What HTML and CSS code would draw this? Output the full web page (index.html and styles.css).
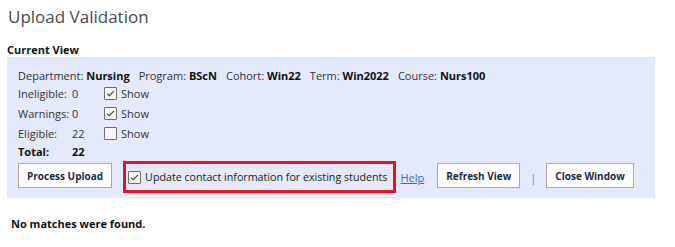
FILE: index.html
```html
<!DOCTYPE html>
<html lang="en">
<head>
  <meta charset="UTF-8" />
  <title>Upload Validation</title>
  <link rel="stylesheet" href="styles.css">
</head>
<body>
  <h1 class="page-title">Upload Validation</h1>

  <h2 class="section-title">Current View</h2>
  <div class="panel">
    <div class="filters">
      <span>Department: <b>Nursing</b></span>
      <span>Program: <b>BScN</b></span>
      <span>Cohort: <b>Win22</b></span>
      <span>Term: <b>Win2022</b></span>
      <span>Course: <b>Nurs100</b></span>
    </div>

    <table class="counts">
      <tr>
        <td class="label">Ineligible:</td>
        <td class="num">0</td>
        <td><label class="show"><input type="checkbox" checked> Show</label></td>
      </tr>
      <tr>
        <td class="label">Warnings:</td>
        <td class="num">0</td>
        <td><label class="show"><input type="checkbox" checked> Show</label></td>
      </tr>
      <tr>
        <td class="label">Eligible:</td>
        <td class="num">22</td>
        <td><label class="show"><input type="checkbox"> Show</label></td>
      </tr>
      <tr class="total">
        <td class="label">Total:</td>
        <td class="num">22</td>
        <td></td>
      </tr>
    </table>

    <div class="actions">
      <button type="button" class="btn">Process Upload</button>
      <label class="update-box"><input type="checkbox" checked> Update contact information for existing students</label>
      <a href="#" class="help">Help</a>
      <button type="button" class="btn">Refresh View</button>
      <span class="sep">|</span>
      <button type="button" class="btn">Close Window</button>
    </div>
  </div>

  <p class="result">No matches were found.</p>
</body>
</html>
```

FILE: styles.css
```css
* {
  box-sizing: border-box;
}

body {
  margin: 0;
  padding: 4px 7px;
  font-family: 'Open Sans', 'Liberation Sans', sans-serif;
  font-size: 11px;
  color: #333;
  background: #fff;
}

.page-title {
  margin: 0;
  font-size: 17px;
  font-weight: 400;
  color: #4a4a4a;
  line-height: 26px;
  padding-left: 1px;
}

.section-title {
  margin: 12px 0 0;
  font-size: 11px;
  font-weight: 700;
  color: #111;
  line-height: 15px;
}

.panel {
  background: #e4e9fb;
  width: 648px;
  padding: 12px 11px 5px;
}

.filters {
  display: flex;
  gap: 9px;
  line-height: 14px;
}

.filters b {
  color: #111;
}

.counts {
  border-collapse: collapse;
}

.counts td {
  padding: 0;
  height: 20px;
  vertical-align: middle;
}

.counts .label {
  width: 54px;
}

.counts .num {
  width: 32px;
}

.counts .total td {
  height: 17px;
  font-weight: 700;
  color: #111;
}

.show {
  display: flex;
  align-items: center;
  gap: 4px;
}

input[type="checkbox"] {
  appearance: none;
  -webkit-appearance: none;
  flex-shrink: 0;
  width: 13px;
  height: 13px;
  margin: 0;
  border: 1px solid #6e6e6e;
  border-radius: 1px;
  background: #f7f7f7;
}

input[type="checkbox"]:checked {
  background: #f7f7f7 url("data:image/svg+xml,%3Csvg xmlns='http://www.w3.org/2000/svg' viewBox='0 0 11 11'%3E%3Cpath d='M2.2 5.6 L4.3 7.7 L8.8 3.2' fill='none' stroke='%23404040' stroke-width='1.2'/%3E%3C/svg%3E") center / 11px 11px no-repeat;
}

.actions {
  display: flex;
  align-items: center;
  margin-top: 1px;
  white-space: nowrap;
}

.btn {
  flex-shrink: 0;
  font-family: inherit;
  font-size: 10px;
  font-weight: 700;
  color: #1c2a44;
  background: #fff;
  border: 1px solid #a9a9a9;
  height: 25px;
  padding: 0 8px;
  margin-bottom: 3px;
  white-space: nowrap;
  cursor: pointer;
}

.update-box {
  flex-shrink: 0;
  display: flex;
  align-items: center;
  gap: 4px;
  margin-left: 11px;
  height: 32px;
  padding: 0 6px 0 2px;
  border: 3px solid #e8141f;
  font-size: 10.7px;
  color: #222;
}

.help {
  margin: 0 13px 0 4px;
  color: #2a6ebb;
  font-size: 11px;
}

.sep {
  color: #888;
  margin: 0 10px;
}

.result {
  margin: 18px 0 0 4px;
  font-weight: 700;
  color: #111;
}
```
